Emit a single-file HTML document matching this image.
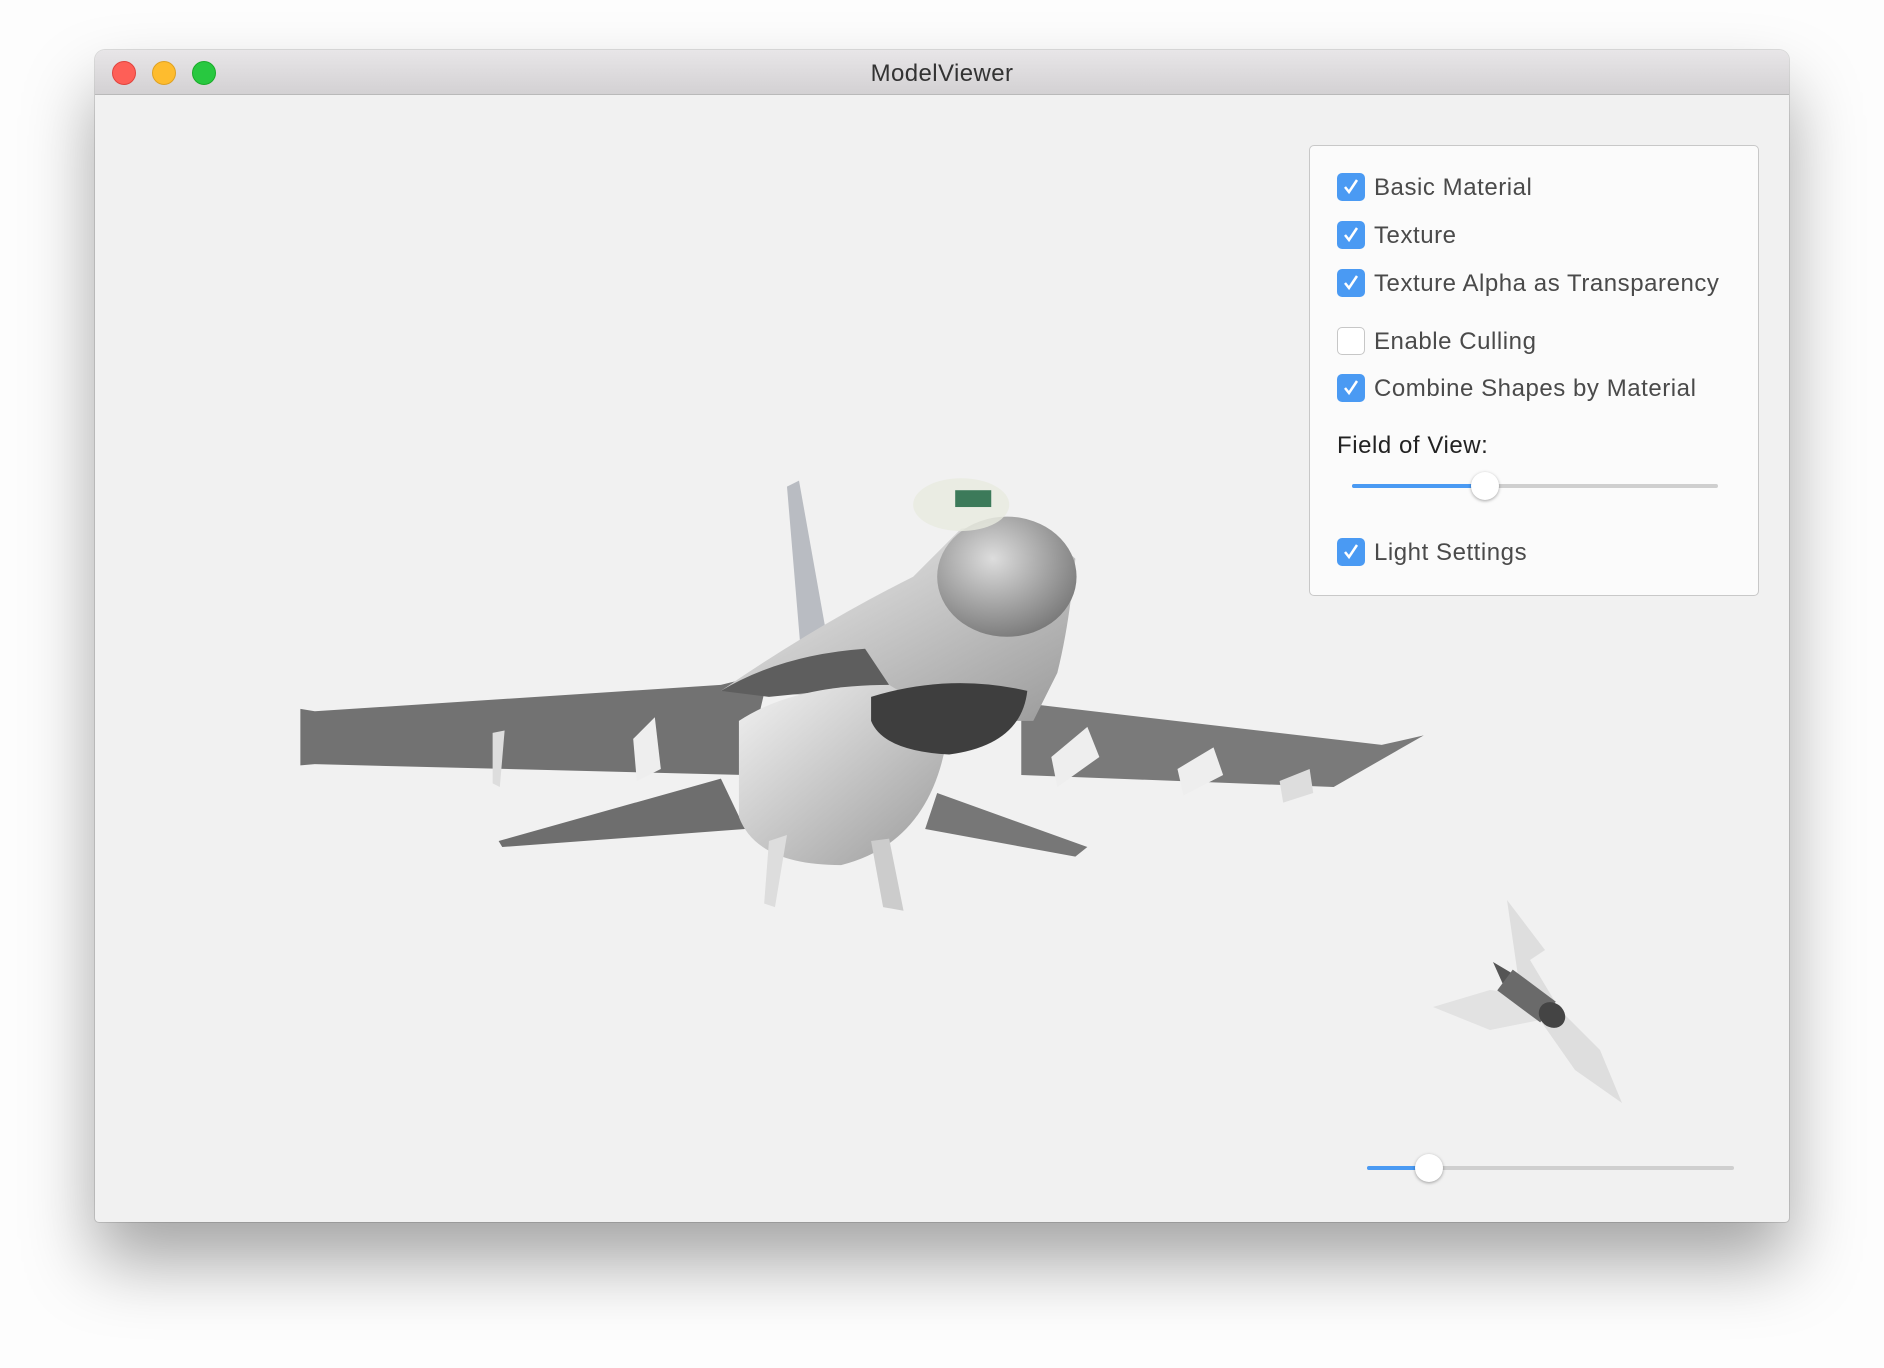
<!DOCTYPE html>
<html><head><meta charset="utf-8"><style>
html,body{margin:0;padding:0;width:1884px;height:1368px;overflow:hidden;background:#fdfdfd;font-family:"Liberation Sans",sans-serif}
.win{position:absolute;left:95px;top:50px;width:1694px;height:1172px;background:#f1f1f1;border-radius:10px 10px 4px 4px;box-shadow:0 40px 70px rgba(0,0,0,0.35),0 0 0 1px rgba(0,0,0,0.12);overflow:hidden}
.tb{position:absolute;left:0;top:0;right:0;height:44px;background:linear-gradient(#e8e6e8,#d3d1d3);border-bottom:1px solid #b9b9b9}
.tl{position:absolute;top:11px;width:22px;height:22px;border-radius:50%}
.title{position:absolute;left:0;right:0;top:10px;text-align:center;font-size:24px;color:#333;letter-spacing:0.4px}
.panel{position:absolute;left:1214px;top:95px;width:448px;height:449px;background:#fbfbfb;border:1px solid #c8c8c8;border-radius:5px}
.cb{position:absolute;left:27px;width:28px;height:28px;border-radius:5px;background:#4a9af3}
.cb svg{position:absolute;left:4px;top:4px}
.cb.off{background:#fff;border:1px solid #c7c7c7;width:26px;height:26px}
.lab{position:absolute;left:64px;font-size:24px;color:#4a4a4a;line-height:28px;white-space:nowrap;letter-spacing:0.55px}
.tr{position:absolute;height:4px;border-radius:2px;background:#cfcfcf}
.th{position:absolute;width:28px;height:28px;border-radius:50%;background:#fff;box-shadow:0 1px 3px rgba(0,0,0,0.35)}
</style></head><body>
<div class="win">
<div class="tb">
<div class="tl" style="left:17px;background:#fe5f57;border:1px solid #e0443e"></div>
<div class="tl" style="left:57px;background:#febc2e;border:1px solid #dea123"></div>
<div class="tl" style="left:97px;background:#28c840;border:1px solid #1aab29"></div>
<div class="title">ModelViewer</div>
</div>
<div class="panel">
<div class="cb" style="top:27px"><svg width="20" height="20"><path d="M4 10 L8 15 L16 3" stroke="#fff" stroke-width="2.5" fill="none"/></svg></div><div class="lab" style="top:28px">Basic Material</div>
<div class="cb" style="top:75px"><svg width="20" height="20"><path d="M4 10 L8 15 L16 3" stroke="#fff" stroke-width="2.5" fill="none"/></svg></div><div class="lab" style="top:76px">Texture</div>
<div class="cb" style="top:123px"><svg width="20" height="20"><path d="M4 10 L8 15 L16 3" stroke="#fff" stroke-width="2.5" fill="none"/></svg></div><div class="lab" style="top:124px">Texture Alpha as Transparency</div>
<div class="cb off" style="top:181px"></div><div class="lab" style="top:182px">Enable Culling</div>
<div class="cb" style="top:228px"><svg width="20" height="20"><path d="M4 10 L8 15 L16 3" stroke="#fff" stroke-width="2.5" fill="none"/></svg></div><div class="lab" style="top:229px">Combine Shapes by Material</div>
<div class="lab" style="left:27px;top:286px;color:#222">Field of View:</div>
<div class="tr" style="left:42px;top:338px;width:366px"></div>
<div class="tr" style="left:42px;top:338px;width:124px;background:#4a9af3"></div>
<div class="th" style="left:161px;top:326px"></div>
<div class="cb" style="top:392px"><svg width="20" height="20"><path d="M4 10 L8 15 L16 3" stroke="#fff" stroke-width="2.5" fill="none"/></svg></div><div class="lab" style="top:393px">Light Settings</div>
</div>
<div class="tr" style="left:1272px;top:1116px;width:367px"></div>
<div class="tr" style="left:1272px;top:1116px;width:60px;background:#4a9af3"></div>
<div class="th" style="left:1320px;top:1104px"></div>
</div>
<svg width="1884" height="1368" style="position:absolute;left:0;top:0">
<defs>
<linearGradient id="body" x1="0" y1="0" x2="1" y2="1"><stop offset="0" stop-color="#f2f2f2"/><stop offset="1" stop-color="#9a9a9a"/></linearGradient>
<radialGradient id="nose" cx="0.4" cy="0.35" r="0.7"><stop offset="0" stop-color="#ddd"/><stop offset="1" stop-color="#777"/></radialGradient>
</defs>
<g transform="scale(1.2015)">
<polygon points="250,590 262,592 600,570 640,560 620,645 262,636 250,637" fill="#727272"/>
<polygon points="850,585 1150,620 1185,612 1110,655 850,645" fill="#7a7a7a"/>
<polygon points="415,700 600,648 620,690 418,705" fill="#6e6e6e"/>
<polygon points="780,660 905,705 895,713 770,690" fill="#777"/>
<polygon points="655,405 665,400 690,540 668,560" fill="#b9bcc2"/>
<path d="M600,575 Q680,520 760,480 L800,440 Q860,430 895,465 Q890,520 880,560 L860,600 L790,600 L700,580 Z" fill="url(#body)"/>
<path d="M600,575 Q650,545 720,540 L740,570 L640,580 Z" fill="#5e5e5e"/>
<ellipse cx="838" cy="480" rx="58" ry="50" fill="url(#nose)"/>
<path d="M615,600 Q660,570 740,570 L790,600 Q780,700 700,720 Q630,720 615,680 Z" fill="url(#body)"/>
<path d="M725,580 Q790,560 855,575 Q850,620 790,628 Q735,625 725,600 Z" fill="#3e3e3e"/>
<ellipse cx="800" cy="420" rx="40" ry="22" fill="#e8ebe0" opacity="0.8"/>
<rect x="795" y="408" width="30" height="14" fill="#3c7a5a"/>
<polygon points="527,615 545,597 550,640 530,650" fill="#eee"/>
<polygon points="875,630 905,605 915,630 880,655" fill="#eee"/>
<polygon points="980,640 1010,622 1018,645 985,662" fill="#eee"/>
<polygon points="1065,650 1090,640 1093,660 1068,668" fill="#ddd"/>
<polygon points="410,610 420,608 416,655 410,652" fill="#ddd"/>
<polygon points="640,700 655,695 645,755 636,752" fill="#ddd"/>
<polygon points="725,700 740,698 752,758 735,755" fill="#ccc"/>
</g>
<polygon points="1507,900 1545,950 1530,960 1560,1010 1600,1050 1622,1103 1575,1070 1540,1020 1520,990" fill="#dedede"/>
<polygon points="1433,1007 1490,990 1530,995 1540,1020 1490,1030" fill="#e2e2e2"/>
<polygon points="1493,962 1520,978 1510,1000" fill="#555"/>
<line x1="1505" y1="980" x2="1548" y2="1012" stroke="#6a6a6a" stroke-width="26" stroke-linecap="butt"/>
<ellipse cx="1552" cy="1015" rx="12" ry="14" fill="#444" transform="rotate(-50 1552 1015)"/>
</svg>
</body></html>
